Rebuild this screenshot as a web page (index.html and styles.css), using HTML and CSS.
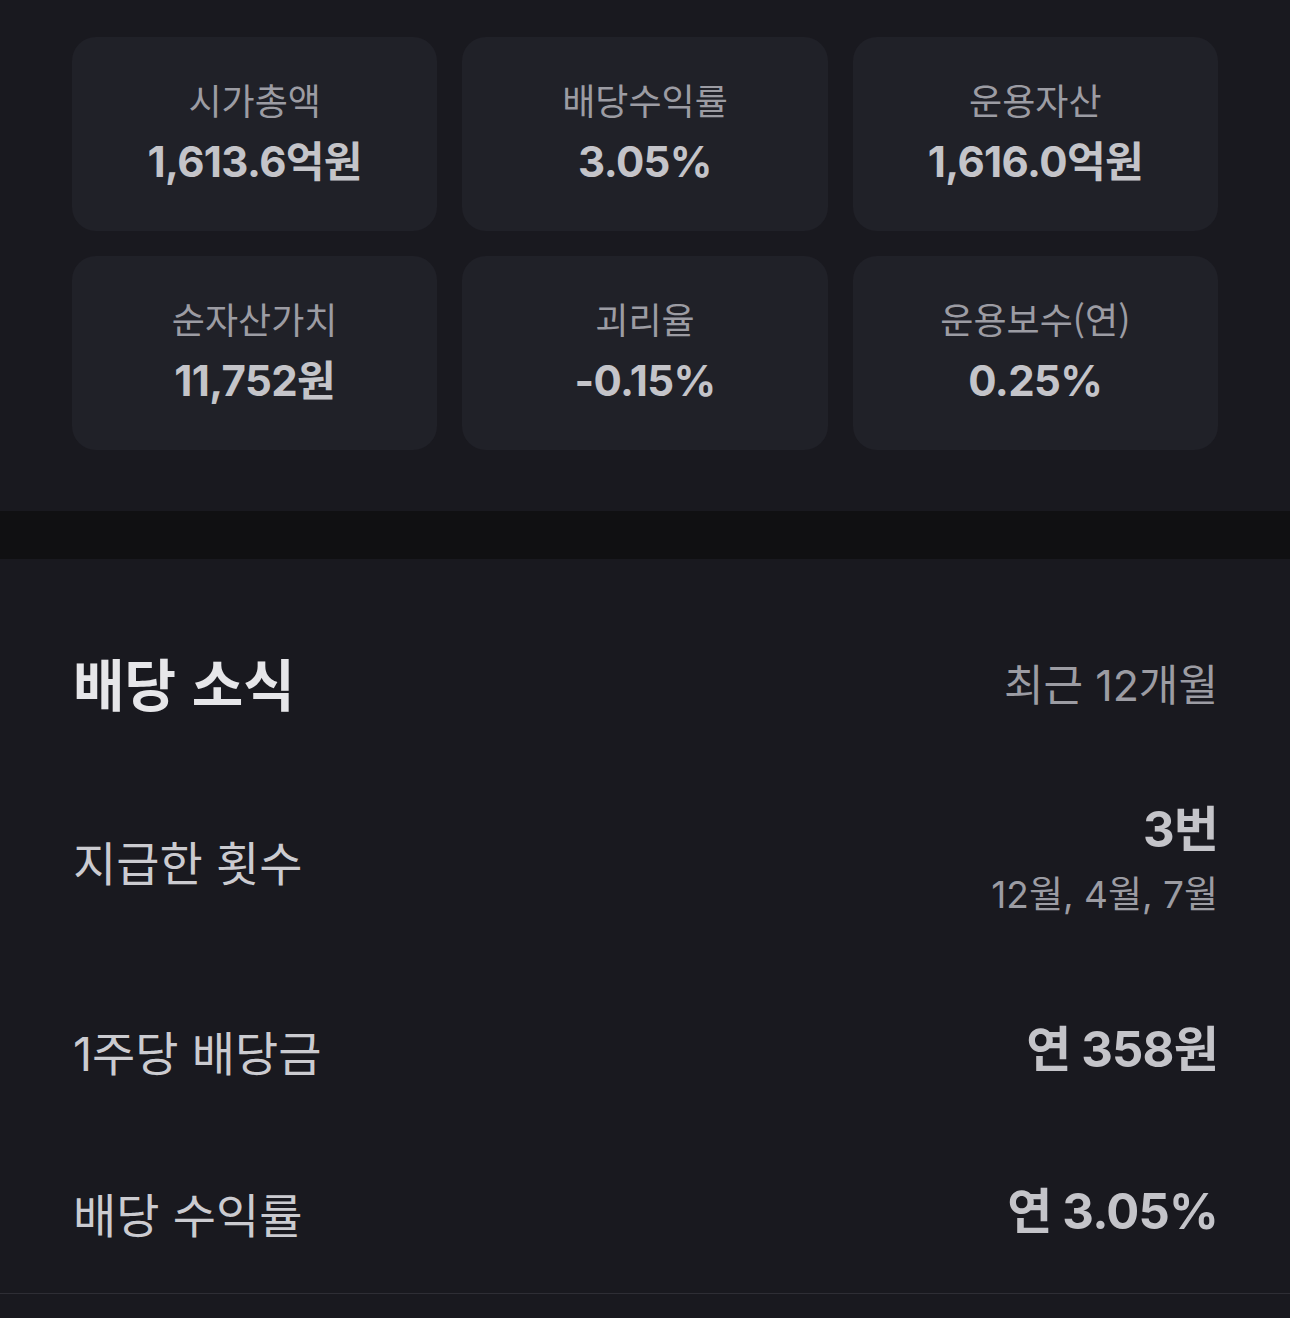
FILE: index.html
```html
<!DOCTYPE html>
<html lang="ko">
<head>
<meta charset="utf-8">
<title>ETF 정보</title>
<link rel="stylesheet" href="styles.css">
</head>
<body>
<section class="stats">
  <div class="card"><div class="card-label">시가총액</div><div class="card-value">1,613.6억원</div></div>
  <div class="card"><div class="card-label">배당수익률</div><div class="card-value">3.05%</div></div>
  <div class="card"><div class="card-label">운용자산</div><div class="card-value">1,616.0억원</div></div>
  <div class="card"><div class="card-label">순자산가치</div><div class="card-value">11,752원</div></div>
  <div class="card"><div class="card-label">괴리율</div><div class="card-value">-0.15%</div></div>
  <div class="card"><div class="card-label">운용보수(연)</div><div class="card-value">0.25%</div></div>
</section>
<div class="band"></div>
<section class="dividend">
  <header class="div-header">
    <h2 class="div-title">배당 소식</h2>
    <span class="div-period">최근 12개월</span>
  </header>
  <div class="div-row row-tall">
    <span class="row-label">지급한 횟수</span>
    <div class="row-right">
      <span class="row-value">3번</span>
      <span class="row-sub">12월, 4월, 7월</span>
    </div>
  </div>
  <div class="div-row">
    <span class="row-label">1주당 배당금</span>
    <span class="row-value">연 358원</span>
  </div>
  <div class="div-row">
    <span class="row-label">배당 수익률</span>
    <span class="row-value">연 3.05%</span>
  </div>
  <div class="rule"></div>
</section>
</body>
</html>
```

FILE: styles.css
```css
html, body {
  margin: 0;
  padding: 0;
  background: #19191f;
}
body {
  font-family: "Inter", "Noto Sans CJK KR", sans-serif;
  width: 1290px;
  height: 1318px;
  overflow: hidden;
}
.stats {
  display: grid;
  grid-template-columns: repeat(3, 1fr);
  gap: 25px;
  padding: 37px 72px 61px;
}
.card {
  height: 194px;
  box-sizing: border-box;
  background: #202128;
  border-radius: 24px;
  display: flex;
  flex-direction: column;
  align-items: center;
  padding-top: 37px;
}
.card-label {
  font-size: 36px;
  line-height: 50px;
  color: #9c9ca3;
  font-family: "Noto Sans CJK KR", sans-serif;
}
.card-value {
  margin-top: 12px;
  font-size: 42px;
  line-height: 52px;
  font-weight: 700;
  color: #c4c4c9;
  letter-spacing: -0.6px;
}
.band {
  height: 48px;
  background: #101012;
}
.dividend {
  padding: 86px 72px 0 73px;
}
.div-header {
  display: flex;
  justify-content: space-between;
  align-items: center;
  height: 73px;
  margin-bottom: 33px;
}
.div-title {
  margin: 0;
  font-size: 56px;
  font-weight: 700;
  color: #e6e6e9;
  font-family: "Noto Sans CJK KR", sans-serif;
}
.div-period {
  font-size: 43px;
  color: #9c9ca3;
}
.div-row {
  display: flex;
  justify-content: space-between;
  align-items: center;
  height: 162px;
}
.row-tall {
  height: 218px;
}
.row-label {
  font-size: 47px;
  color: #cbcbd0;
}
.row-right {
  display: flex;
  flex-direction: column;
  align-items: flex-end;
}
.row-value {
  font-size: 49px;
  line-height: 60px;
  font-weight: 700;
  color: #c4c4c9;
  letter-spacing: -0.8px;
}
.row-sub {
  font-size: 37px;
  line-height: 50px;
  color: #9c9ca3;
  margin-top: 10px;
}
.rule {
  height: 1px;
  background: #2e2e35;
  margin: 0 -72px 0 -73px;
}
```
